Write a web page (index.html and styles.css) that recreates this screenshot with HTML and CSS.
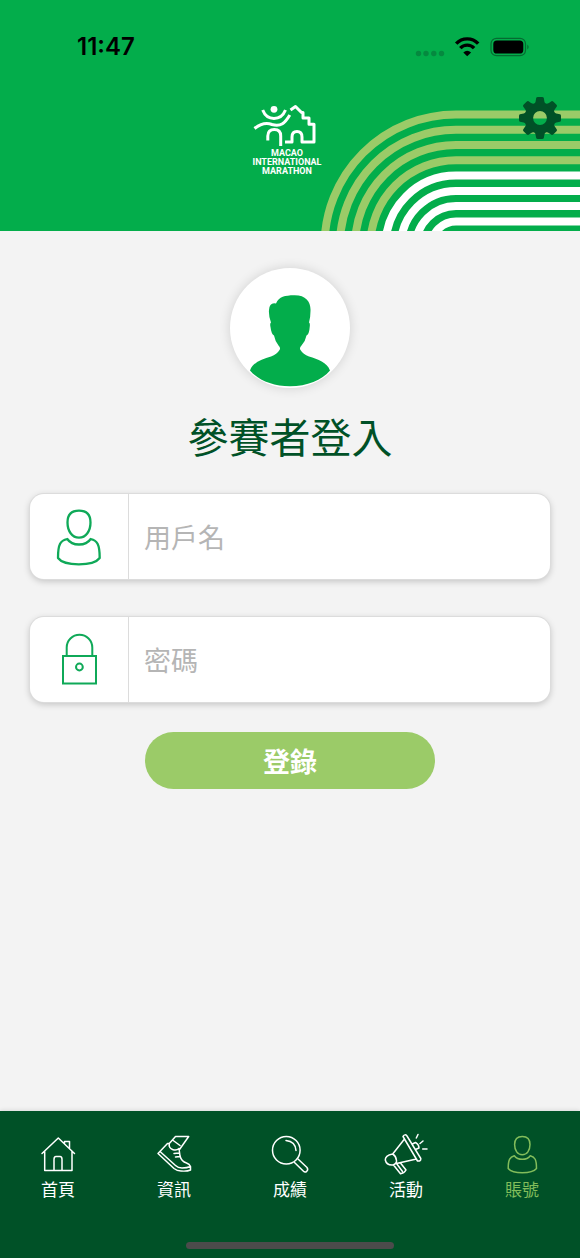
FILE: index.html
```html
<!DOCTYPE html>
<html lang="zh-Hant">
<head>
<meta charset="utf-8">
<meta name="viewport" content="width=device-width, initial-scale=1">
<title>參賽者登入</title>
<link rel="stylesheet" href="styles.css">
</head>
<body>
<div class="app">
  <header class="header">
    <svg class="track" viewBox="0 0 260 131" width="260" height="131" fill="none" stroke-width="8" aria-hidden="true">
      <g stroke="#9bcb68">
        <path d="M4.500 146A131.500 131.500 0 0 1 136 14.500H260"/>
        <path d="M19.800 146A116.200 116.200 0 0 1 136 29.800H260"/>
        <path d="M35 146A101 101 0 0 1 136 45H260"/>
        <path d="M50.300 146A85.700 85.700 0 0 1 136 60.300H260"/>
      </g>
      <g stroke="#fff">
        <path d="M65.600 146A70.400 70.400 0 0 1 136 75.600H260"/>
        <path d="M80.900 146A55.100 55.100 0 0 1 136 90.900H260"/>
        <path d="M96 146A40 40 0 0 1 136 106H260"/>
        <path d="M111.500 146A24.500 24.500 0 0 1 136 121.500H260"/>
      </g>
    </svg>
    <div class="status">
      <time class="clock">11:47</time>
      <svg class="signals" viewBox="0 0 116 24" width="116" height="24" aria-hidden="true">
        <g fill="#05893f"><circle cx="4.500" cy="18.500" r="2.700"/><circle cx="12" cy="18.500" r="2.700"/><circle cx="19.800" cy="18.500" r="2.700"/><circle cx="27.500" cy="18.500" r="2.700"/></g>
        <g fill="none" stroke="#000" stroke-width="3.400">
          <path d="M42.200 8.700A15 15 0 0 1 64.200 8.700"/>
          <path d="M46.300 13.100A9.400 9.400 0 0 1 60.100 13.100"/>
        </g>
        <path d="M49.300 17.400Q53.200 13.900 57.100 17.400L53.200 21.300Z"/>
        <rect x="77" y="3.300" width="34.500" height="17.400" rx="5.500" fill="none" stroke="#056b31" stroke-width="1.200"/>
        <rect x="79.300" y="5.500" width="30" height="13" rx="3.600"/>
        <path d="M113.300 9.500Q116 12 113.300 14.500Z" fill="#056b31"/>
      </svg>
    </div>
    <div class="brand">
      <svg viewBox="0 0 68 46" width="68" height="46" fill="none" stroke="#fff" stroke-width="3" stroke-linejoin="round" aria-hidden="true">
        <circle cx="21" cy="6.300" r="3.400" fill="#fff" stroke="none"/>
        <path d="M9.700 7Q13 15.500 21 15.500T32.500 7"/>
        <path d="M1.500 25.500C9 19.500 14 19.500 19 21.500C28 24 32 20 36.800 12"/>
        <path d="M14.800 37.500V33Q15 26.500 21.300 26.500Q27.700 26.500 27.700 33V43"/>
        <path d="M32 39H39V34Q39 28.500 44 28.500Q49 28.500 49 34V39H61V21.300H56V15H50V9.500H48.500L42.500 3.500L37.500 7"/>
      </svg>
      <div class="brand-name">MACAO<br>INTERNATIONAL<br>MARATHON</div>
    </div>
    <button class="settings" type="button" aria-label="設定">
      <svg viewBox="-22 -22 44 44" width="44" height="44" aria-hidden="true">
        <g fill="none" stroke="#005127"><circle r="11.300" stroke-width="8.800"/></g>
        <g fill="#005127">
          <path id="tooth" d="M-6 -13Q-4 -16 -3.800 -20Q-3.600 -21 -2 -21H2Q3.600 -21 3.800 -20Q4 -16 6 -13Z"/>
          <use href="#tooth" transform="rotate(45)"/><use href="#tooth" transform="rotate(90)"/><use href="#tooth" transform="rotate(135)"/><use href="#tooth" transform="rotate(180)"/><use href="#tooth" transform="rotate(225)"/><use href="#tooth" transform="rotate(270)"/><use href="#tooth" transform="rotate(315)"/>
        </g>
      </svg>
    </button>
  </header>

  <main class="main">
    <div class="avatar">
      <svg viewBox="0 0 120 120" width="120" height="120" aria-hidden="true">
        <path fill="#03ad4b" d="M46 35.500C49 28.500 55 27.500 64 27.300C76 27 81 34 80.500 43Q80.500 49 79 54.500Q80.300 55 79.700 59Q79.300 66 76.500 67.500Q75.500 73 71.500 77.500Q69 80 70.500 82Q73 86 79 88.500C88 91.500 97 94 100 102.500C92 112 77 118.300 60 118.300C43 118.300 28 112 20 102.500C23 94 32 91.500 41 88.500Q47 86 49.500 82Q51 80 48.500 77.500Q45 73 44 67.500Q41.300 66 40.500 59Q39.700 55 41 54.500Q38.500 48 39 42Q39.500 34 46 35.500Z"/>
      </svg>
    </div>
    <h1 class="title">參賽者登入</h1>
    <form class="form">
      <div class="field">
        <label class="field-icon" for="user" aria-label="用戶名">
          <svg viewBox="0 0 60 60" width="60" height="60" fill="none" stroke="#0fa958" stroke-width="2.300" stroke-linejoin="round" aria-hidden="true">
            <path d="M30 3.700C37.500 3.700 41.500 8 41.500 15.500C41.500 24 37 30.700 30 30.700S18.500 24 18.500 15.500C18.500 8 22.500 3.700 30 3.700Z"/>
            <path d="M18.300 32Q22 37.500 30 37.500T41.700 32C48 33.500 50.700 37 50.700 51Q46 57.300 29.800 57.300T9 51C9 37 11.500 33.500 18.300 32Z"/>
          </svg>
        </label>
        <input class="field-input" id="user" type="text" placeholder="用戶名">
      </div>
      <div class="field">
        <label class="field-icon" for="pass" aria-label="密碼">
          <svg viewBox="0 0 60 60" width="60" height="60" fill="none" stroke="#0fa958" stroke-width="2" aria-hidden="true">
            <path d="M17.700 26V17.500A12.800 12.800 0 0 1 43.300 17.500V26"/>
            <rect x="14" y="26" width="33" height="27.500"/>
            <circle cx="30.400" cy="37" r="3.400"/>
          </svg>
        </label>
        <input class="field-input" id="pass" type="password" placeholder="密碼">
      </div>
      <button class="submit" type="submit">登錄</button>
    </form>
  </main>

  <nav class="nav">
    <div class="tabs">
      <a class="tab" href="#home">
        <svg class="tab-icon" viewBox="0 0 44 44" aria-hidden="true">
          <path d="M6 20.500L22.300 5L38.500 20.500M8.700 18.500V37.500H36V18.500M18 37V26.500Q18 23.500 20 23.500H24Q26 23.500 26 26.500V37M28.500 10V8.500H33.500V15"/>
        </svg>首頁</a>
      <a class="tab" href="#info">
        <svg class="tab-icon" viewBox="0 0 44 44" aria-hidden="true">
          <path d="M17.300 10.500L23.500 3.500H36.700L27.500 16.500M20.500 7L28 12.500M17.300 10.500Q16.500 15 20.500 16.500T27 15.500M17 10.500H15.500L6 20.500L22 35.500Q25 38 29 38Q35 38.500 38.500 37V33.500Q37.500 31 34.500 30Q29.500 28.500 28 23L27 15.500M8 18.500L23.500 32.500Q26 35 30 35Q35 35 38.500 33.500M22 20.500L27 20M23.500 24L28 23.500"/>
        </svg>資訊</a>
      <a class="tab" href="#results">
        <svg class="tab-icon" viewBox="0 0 44 44" aria-hidden="true">
          <circle cx="18.300" cy="17.300" r="13.800"/>
          <path d="M18 7.500Q27.500 8.500 28 17.500M30 26L39 34.500Q40.500 36.500 38.700 38.300Q37 39.700 35.500 38.300L26.500 29.500"/>
        </svg>成績</a>
      <a class="tab" href="#events">
        <svg class="tab-icon" viewBox="0 0 44 44" aria-hidden="true">
          <path d="M19 3.500Q21 .500 23 3L36.800 25.500Q37 28.500 33.500 28Z M20.500 6L8.700 21M32.500 26L12.500 30.500M8.700 21Q1 22.500 1.300 27Q2.500 32.500 9 32Q13 30.500 12.500 27.500Q12 23 8.700 21M9.500 32L16.500 40.800Q20 40.500 22 37L16.500 30M12.500 30.500L18.500 38.500M28.300 11L31.500 9.500Q35 11.500 35 15L31.500 16.500M32.300 5L34 1.500M36 10.500L39 8M38.700 16H43"/>
        </svg>活動</a>
      <a class="tab tab-active" href="#account" aria-current="page">
        <svg class="tab-icon" viewBox="0 0 44 44" aria-hidden="true">
          <path d="M22.300 3.400C27.500 3.400 30 6.500 30 11.500C30 17.500 27 21.700 22.300 21.700S14.600 17.500 14.600 11.500C14.600 6.500 17 3.400 22.300 3.400ZM14.300 22.700Q17 26.300 22.300 26.300T30.300 22.700C35 24 36.500 26.500 36.500 35.500Q33 39.700 22.300 39.700T8.200 35.500C8.200 26.500 10 24 14.300 22.700Z"/>
        </svg>賬號</a>
    </div>
    <div class="home-bar"></div>
  </nav>
</div>
</body>
</html>
```
FILE: styles.css
```css
* { box-sizing: border-box; }

body {
  margin: 0;
  background: #f3f3f3;
  font-family: "Noto Sans CJK TC", "Noto Sans", sans-serif;
}

.app {
  min-height: 100vh;
  display: flex;
  flex-direction: column;
}

.header {
  position: relative;
  display: flex;
  flex-direction: column;
  padding: 35px 50px 55px 77px;
  background: #03ad4b;
}

.track {
  position: absolute;
  right: 0;
  bottom: 0;
}

.status {
  display: flex;
  justify-content: space-between;
  align-items: center;
}

.clock {
  font: 600 24px/24px Inter, "Liberation Sans", sans-serif;
  color: #000;
}

.brand {
  position: relative;
  display: flex;
  flex-direction: column;
  align-items: center;
  padding-top: 44px;
  margin-right: 33px;
}

.brand-name {
  font: 700 9px/9px Roboto, "Liberation Sans", sans-serif;
  color: #fff;
  text-align: center;
}

.settings {
  position: absolute;
  top: 96px;
  right: 18px;
  padding: 0;
  border: 0;
  background: none;
  cursor: pointer;
}

.settings svg,
.brand svg,
.avatar svg { display: block; }

.main {
  flex: 1;
  display: flex;
  flex-direction: column;
  align-items: center;
  padding: 37px 30px;
}

.avatar {
  border-radius: 50%;
  background: #fff;
  box-shadow: 0 0 12px rgba(0, 0, 0, .14);
}

.title {
  margin: 17px 0 29px;
  font-size: 41px;
  line-height: 60px;
  font-weight: 400;
  color: #005127;
}

.form {
  align-self: stretch;
  display: flex;
  flex-direction: column;
}

.field {
  display: flex;
  height: 85px;
  margin-bottom: 38px;
  border-radius: 14px;
  background: #fff;
  box-shadow: 0 0 0 1px #dcdcdc, 0 2px 7px rgba(0, 0, 0, .22);
}

.field-icon {
  width: 99px;
  display: flex;
  align-items: center;
  justify-content: center;
  border-right: 1px solid #dcdcdc;
}

.field-input {
  flex: 1;
  min-width: 0;
  padding: 0 15px;
  border: 0;
  border-radius: 14px;
  outline: 0;
  background: none;
  font: 27px "Noto Sans CJK TC", "Noto Sans", sans-serif;
  color: #333;
}

.field-input::placeholder {
  color: #b5b5b5;
  opacity: 1;
}

.submit {
  align-self: center;
  width: 290px;
  height: 57px;
  margin-top: -8px;
  padding: 0;
  border: 0;
  border-radius: 29px;
  background: #9bcb68;
  color: #fff;
  font: 700 27px "Noto Sans CJK TC", "Noto Sans", sans-serif;
  cursor: pointer;
}

.nav {
  display: flex;
  flex-direction: column;
  align-items: center;
  gap: 41px;
  padding: 22px 0 9px;
  background: #005127;
  box-shadow: 0 -1px 4px rgba(0, 0, 0, .1);
}

.tabs {
  align-self: stretch;
  display: grid;
  grid-template-columns: repeat(5, 1fr);
}

.tab {
  display: flex;
  flex-direction: column;
  align-items: center;
  font-size: 17px;
  line-height: 24px;
  color: #fff;
  text-decoration: none;
}

.tab-active { color: #82bd5b; }

.tab-icon {
  width: 44px;
  height: 44px;
  fill: none;
  stroke: currentColor;
  stroke-width: 1.5;
  stroke-linejoin: round;
  stroke-linecap: round;
}

.home-bar {
  width: 36%;
  height: 7px;
  border-radius: 4px;
  background: #4b4b4b;
}
```
